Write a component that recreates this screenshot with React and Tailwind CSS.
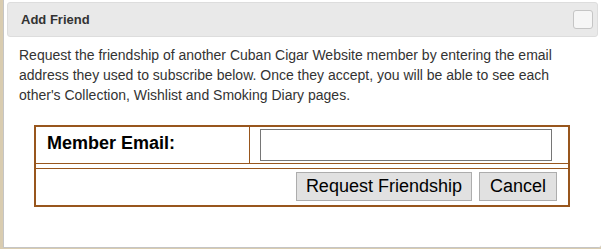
import React from 'react';

export default function App() {
  return (
    <div className="w-[601px] h-[249px] bg-[#d9ccb0] flex overflow-hidden" style={{ fontFamily: '"Liberation Sans", Arial, sans-serif' }}>
      <div className="ml-[3px] w-[598px] h-[248px] bg-white border-l border-b border-[#c5c5c5] rounded-br-[3px] pt-[2px] pl-[3px] pr-[3px] flex flex-col">
        {/* Title bar */}
        <div className="h-[35px] bg-[#e9e9e9] border border-[#dddddd] rounded-[3px] flex items-center justify-between pl-[13px] pr-[4px]">
          <span className="text-[13px] font-bold text-[#333333]">Add Friend</span>
          <button className="w-[20px] h-[19px] bg-[#f6f6f6] border border-[#c5c5c5] rounded-[3px]"></button>
        </div>

        {/* Content */}
        <div className="pl-[12px] pr-[10px] pt-[8px]">
          <p className="text-[14px] leading-[20px] text-[#333333]">
            Request the friendship of another Cuban Cigar Website member by entering the email address they used to subscribe below. Once they accept, you will be able to see each other's Collection, Wishlist and Smoking Diary pages.
          </p>

          <div className="mt-[20px] ml-[15px] w-[536px] h-[82px] border-2 border-[#98561d] flex flex-col">
            <div className="h-[37px] flex border-b border-[#98561d]">
              <div className="w-[214px] border-r border-[#98561d] pl-[11px] pt-[3px] text-[18px] font-bold text-black">
                Member Email:
              </div>
              <div className="flex-1 pl-[10px] pt-[2px]">
                <input type="text" className="w-[292px] h-[32px] border border-[#767676] bg-white outline-none" />
              </div>
            </div>
            <div className="mt-[4px] flex-1 border-t border-[#98561d] flex justify-end items-start gap-[7px] pt-[3px] pr-[11px]">
              <button className="h-[29px] px-[9px] bg-[#e1e1e1] border border-[#adadad] text-[18px] text-black">
                Request Friendship
              </button>
              <button className="h-[29px] px-[10px] bg-[#e1e1e1] border border-[#adadad] text-[18px] text-black">
                Cancel
              </button>
            </div>
          </div>
        </div>
      </div>
    </div>
  );
}
